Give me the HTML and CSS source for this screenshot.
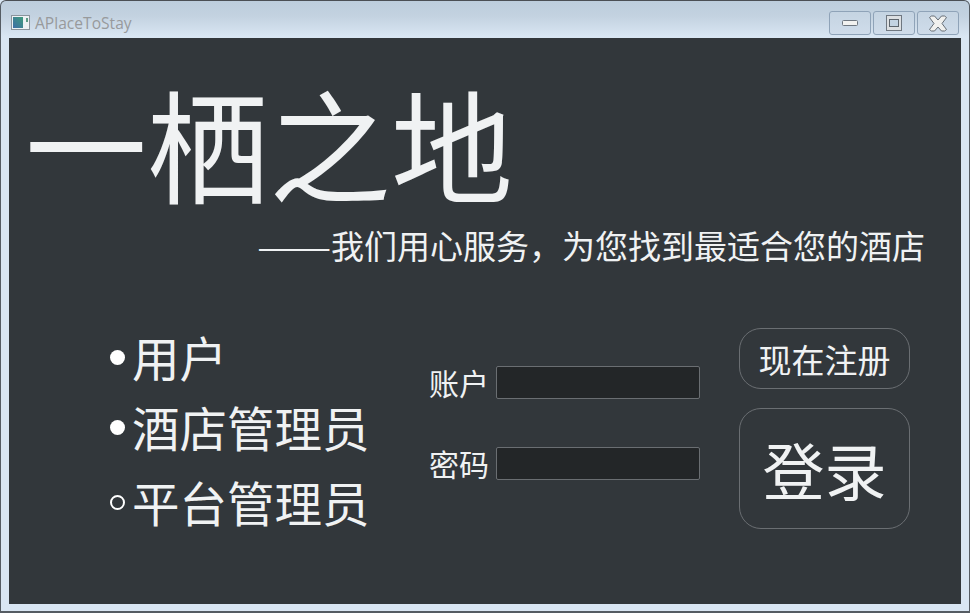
FILE: index.html
```html
<!DOCTYPE html>
<html lang="zh-CN">

<head>
    <meta charset="UTF-8">
    <title>APlaceToStay</title>
    <link rel="stylesheet" href="styles.css">
</head>

<body>
    <div class="window">
        <div class="titlebar">
            <div class="app-title">
                <svg class="app-icon" width="19" height="15" viewBox="0 0 19 15">
                    <defs>
                        <linearGradient id="iconfill" x1="0" y1="1" x2="1" y2="0">
                            <stop offset="0" stop-color="#3f6fa8" />
                            <stop offset="1" stop-color="#3f9a7c" />
                        </linearGradient>
                    </defs>
                    <rect x="0.5" y="0.5" width="18" height="14" fill="#eef2f4" stroke="#8b949c" />
                    <rect x="2" y="2" width="10" height="11" fill="url(#iconfill)" />
                    <rect x="15" y="3" width="2" height="4" fill="#5c9a84" />
                </svg>
                <span>APlaceToStay</span>
            </div>
            <div class="win-buttons">
                <div class="win-btn">
                    <svg width="18" height="8" viewBox="0 0 18 8">
                        <rect x="1.500" y="1.500" width="15" height="5" rx="1" fill="#f2f2f0" stroke="#6f7780" />
                    </svg>
                </div>
                <div class="win-btn">
                    <svg width="16" height="16" viewBox="0 0 16 16">
                        <rect x="0.500" y="0.500" width="15" height="15" fill="#dcdfe2" stroke="#6f7780" />
                        <rect x="3.500" y="4.500" width="9" height="7" fill="#c3d3e2" stroke="#5d656d" />
                    </svg>
                </div>
                <div class="win-btn">
                    <svg width="20" height="17" viewBox="0 0 20 17">
                        <path d="M1.500 2.500l2-1.500h3l3.500 4 3.500-4h3l2 1.500-4.500 6 4.500 6-2 1.500h-3l-3.500-4-3.500 4h-3l-2-1.500 4.500-6z" fill="#f0f0ee" stroke="#666e76" stroke-linejoin="round" />
                    </svg>
                </div>
            </div>
        </div>

        <div class="content">
            <h1 class="brand">一栖之地</h1>
            <p class="slogan"><span class="dash">——</span>我们用心服务，为您找到最适合您的酒店</p>

            <div class="login-row">
                <ul class="roles">
                    <li class="role"><span class="dot"></span>用户</li>
                    <li class="role"><span class="dot"></span>酒店管理员</li>
                    <li class="role role-last"><span class="dot dot-empty"></span>平台管理员</li>
                </ul>
                <div class="fields">
                    <label class="field">账户<input type="text" class="field-input"></label>
                    <label class="field">密码<input type="password" class="field-input"></label>
                </div>
                <div class="actions">
                    <button class="btn btn-register">现在注册</button>
                    <button class="btn btn-login">登录</button>
                </div>
            </div>
        </div>
    </div>
</body>

</html>
```

FILE: styles.css
```css
* {
    box-sizing: border-box;
}

html,
body {
    margin: 0;
    padding: 0;
    height: 100%;
    overflow: hidden;
}

body {
    font-family: "Noto Sans CJK SC", "Noto Sans", sans-serif;
    background-color: #d9e6f3;
}

.window {
    height: 613px;
    display: flex;
    flex-direction: column;
    padding: 0 8px 7px 8px;
    border: 1px solid #555c63;
    border-bottom-width: 2px;
    border-top-color: #4b4f54;
    border-radius: 6px 6px 0 0;
    background: linear-gradient(#bdcddc 0, #c3d2e0 15px, #d9e6f3 36px);
}

.titlebar {
    height: 37px;
    flex: none;
    display: flex;
    justify-content: space-between;
    margin-left: -8px;
    margin-right: -8px;
}

.app-title {
    display: flex;
    align-items: center;
    gap: 5px;
    padding: 6px 0 0 10px;
    font-family: "Open Sans", sans-serif;
    font-size: 15.600px;
    color: #989a9c;
}

.app-icon {
    display: block;
}

.win-buttons {
    display: flex;
    gap: 2px;
    padding: 10px 10px 0 0;
    align-items: flex-start;
}

.win-btn {
    width: 42px;
    height: 24px;
    display: flex;
    align-items: center;
    justify-content: center;
    border: 1px solid #8fa3b8;
    border-radius: 3px;
    background: linear-gradient(#c5d4e2, #cfdcea);
}

.content {
    flex: 1;
    background-color: #32373b;
    color: #f0f2f3;
    padding: 0 36px 0 16px;
}

.brand {
    margin: 33px 0 0 0;
    font-size: 122px;
    font-weight: 400;
    line-height: 140px;
}

.slogan {
    margin: 10px 0 0 0;
    font-size: 33px;
    font-weight: 400;
    line-height: 48px;
    text-align: right;
}

.dash {
    display: inline-block;
    transform: scaleX(1.345);
    transform-origin: right center;
}

.login-row {
    display: flex;
    margin-top: 59px;
}

.roles {
    list-style: none;
    margin: -6px 0 0 0;
    padding: 0 0 0 85px;
    width: 404px;
    flex: none;
}

.role {
    display: flex;
    align-items: center;
    gap: 7px;
    font-size: 47.500px;
    font-weight: 400;
    line-height: 70px;
    height: 70px;
    white-space: nowrap;
}

.role-last {
    margin-top: 5px;
}

.dot {
    width: 15px;
    height: 15px;
    border-radius: 50%;
    background-color: #fff;
    flex: none;
}

.dot-empty {
    background-color: transparent;
    border: 2px solid #fff;
}

.fields {
    display: flex;
    flex-direction: column;
    gap: 48px;
    padding-top: 38px;
    width: 310px;
    flex: none;
}

.field {
    display: flex;
    align-items: center;
    gap: 7px;
    font-size: 30px;
    font-weight: 400;
    line-height: 33px;
    height: 33px;
}

.field-input {
    width: 204px;
    height: 33px;
    background-color: #232628;
    border: 1px solid #6a6e72;
    border-radius: 2px;
    outline: none;
}

.actions {
    display: flex;
    flex-direction: column;
    gap: 19px;
    width: 171px;
    flex: none;
}

.btn {
    width: 171px;
    background: none;
    border: 1px solid #6a6e72;
    color: #f0f2f3;
    font-family: inherit;
    font-weight: 400;
    padding: 0;
}

.btn-register {
    height: 61px;
    border-radius: 22px;
    font-size: 33px;
}

.btn-login {
    height: 121px;
    border-radius: 22px;
    font-size: 62px;
}
```
